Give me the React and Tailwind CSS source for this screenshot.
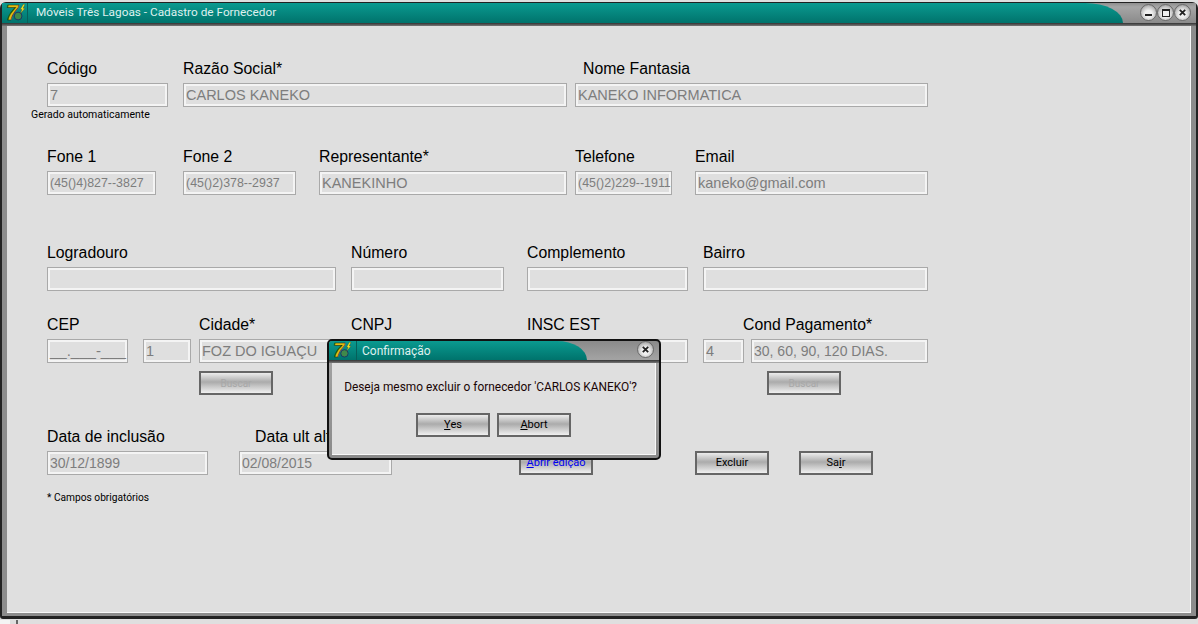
const sans = "font-['Liberation_Sans',Arial,sans-serif]";
const small = "font-['Roboto','Liberation_Sans',sans-serif]";

function Logo({ className }) {
  return (
    <svg viewBox="0 0 22 20" className={`overflow-visible ${className}`}>
      <circle cx="14" cy="13.5" r="4.5" fill="#3f8a4a" stroke="#1c2a66" strokeWidth="1" />
      <text x="0" y="18" fontSize="25" fontWeight="700" fontStyle="italic" fontFamily="'Liberation Sans',sans-serif" fill="#e3bf12" stroke="#2a1a00" strokeWidth="0.7">7</text>
      <path d="M20 0 L16.5 6 L18.5 6 L16.5 11 L22 4.5 L19.8 4.5 L22 0 Z" fill="#f6e520" stroke="#333" strokeWidth="0.4" />
    </svg>
  );
}

function Round({ children, className = "" }) {
  return (
    <div className={`w-[17px] h-[17px] rounded-full border border-[#6a6a6a] bg-[radial-gradient(circle_at_50%_60%,#f0f0f0_30%,#c4c4c4_60%,#777_100%)] flex items-center justify-center ${className}`}>
      {children}
    </div>
  );
}

function Btn({ children, className = "", text = "text-black text-[11px]" }) {
  return (
    <div className={`w-[74px] h-[24px] border-2 border-[#666] bg-[linear-gradient(#ececec,#ababab_45%,#f0f0f0)] flex items-center justify-center ${small} ${text} ${className}`}>
      {children}
    </div>
  );
}

function Input({ value, className = "" }) {
  return (
    <div className={`h-[24px] border border-[#a9a9a9] shadow-[inset_0_0_0_2px_#f4f4f4] px-[2px] pt-[1px] flex items-center text-[#7d7d7d] whitespace-nowrap overflow-hidden ${className}`}>
      {value}
    </div>
  );
}

function Field({ label, value = "", className = "", labelClass = "", inputClass = "text-[14.5px]" }) {
  return (
    <div className={`flex flex-col ${className}`}>
      <div className={`h-[25px] pt-[2px] text-[15.8px] leading-[18px] text-black whitespace-nowrap ${labelClass}`}>{label}</div>
      <Input value={value} className={inputClass} />
    </div>
  );
}

function FormRows() {
  return (
    <div className={`pl-[40px] ${sans}`}>
      <div className="flex pt-[32px]">
        <Field className="w-[121px]" label="Código" value="7" />
        <Field className="w-[384px] ml-[15px]" label="Razão Social*" value="CARLOS KANEKO" />
        <Field className="w-[353px] ml-[8px]" label="Nome Fantasia" labelClass="pl-[8px]" value="KANEKO INFORMATICA" />
      </div>
      <div className={`-ml-[16px] h-[39px] pt-[1px] text-[10.5px] leading-[14px] text-black ${small}`}>Gerado automaticamente</div>
      <div className="flex">
        <Field className="w-[109px]" label="Fone 1" value="(45()4)827--3827" inputClass="text-[12.4px]" />
        <Field className="w-[113px] ml-[27px]" label="Fone 2" value="(45()2)378--2937" inputClass="text-[12.4px]" />
        <Field className="w-[248px] ml-[23px]" label="Representante*" value="KANEKINHO" />
        <Field className="w-[97px] ml-[8px]" label="Telefone" value="(45()2)229--1911" inputClass="text-[12.4px]" />
        <Field className="w-[233px] ml-[23px]" label="Email" value="kaneko@gmail.com" />
      </div>
      <div className="flex mt-[47px]">
        <Field className="w-[289px]" label="Logradouro" />
        <Field className="w-[153px] ml-[15px]" label="Número" />
        <Field className="w-[161px] ml-[23px]" label="Complemento" />
        <Field className="w-[225px] ml-[15px]" label="Bairro" />
      </div>
      <div className="flex mt-[23px]">
        <Field className="w-[81px]" label="CEP" value="__.___-___" inputClass="text-[15px]" />
        <Field className="w-[48px] ml-[15px]" label={"\u00a0"} value="1" />
        <div className="ml-[8px] w-[144px]">
          <Field label="Cidade*" value="FOZ DO IGUAÇU" />
          <Btn className="mt-[8px]" text="text-[#a8a8a8] text-[10px]">Buscar</Btn>
        </div>
        <Field className="w-[152px] ml-[8px]" label="CNPJ" />
        <Field className="w-[161px] ml-[24px]" label="INSC EST" />
        <Field className="w-[41px] ml-[15px]" label={"\u00a0"} value="4" />
        <div className="ml-[7px] w-[177px]">
          <Field label="Cond Pagamento*" labelClass="-ml-[8px]" value="30, 60, 90, 120 DIAS." inputClass="text-[14px]" />
          <Btn className="mt-[8px] ml-[16px]" text="text-[#a8a8a8] text-[10px]">Buscar</Btn>
        </div>
      </div>
      <div className="flex items-end mt-[31px]">
        <Field className="w-[161px]" label="Data de inclusão" value="30/12/1899" inputClass="text-[14px]" />
        <Field className="w-[153px] ml-[31px]" label="Data ult alt" labelClass="pl-[16px]" value="02/08/2015" inputClass="text-[14px]" />
        <Btn className="ml-[127px]" text="text-[#0000ee] text-[11px]"><span><u>A</u>brir edição</span></Btn>
        <Btn className="ml-[102px]">Excluir</Btn>
        <Btn className="ml-[30px]"><span>Sa<u>i</u>r</span></Btn>
      </div>
      <div className={`mt-[16px] text-[10.2px] leading-[14px] text-black ${small}`}>* Campos obrigatórios</div>
    </div>
  );
}

function Dialog() {
  return (
    <div className={`absolute left-[327px] top-[339px] w-[334px] h-[121px] rounded-[5px] border-2 border-[#111] bg-[linear-gradient(#8a8a8a,#a2a2a2_15%,#8a8a8a)] flex flex-col ${small}`}>
      <div className="h-[19px] relative shrink-0 flex items-center">
        <div className="absolute left-0 top-0 bottom-0 w-[258px] rounded-tr-[30px_19px] rounded-tl-[3px] bg-[linear-gradient(#0a9a90,#00736c)]" />
        <Logo className="relative w-[18px] h-[17px] ml-[4px]" />
        <div className="relative w-[1px] h-[19px] ml-[5px] bg-[#075f5a]" />
        <div className="relative ml-[5px] text-[12px] text-[#dff0ee]">Confirmação</div>
        <Round className="absolute right-[5px] top-[0px]">
          <svg viewBox="0 0 10 10" className="w-[9px] h-[9px]"><path d="M2 2 L8 8 M8 2 L2 8" stroke="#222" strokeWidth="2" /></svg>
        </Round>
      </div>
      <div className="h-[3px] shrink-0 bg-[linear-gradient(#333,#777)]" />
      <div className="flex-1 ml-[3px] mr-[3px] mb-[3px] border-b border-r border-[#f8f8f8] bg-[#dfdfdf] flex flex-col items-center">
        <div className="mt-[16px] -ml-[6px] text-[11.9px] leading-[16px] text-[#1a0505] whitespace-nowrap">Deseja mesmo excluir o fornecedor 'CARLOS KANEKO'?</div>
        <div className="flex gap-[7px] mt-[18px]">
          <Btn><span><u>Y</u>es</span></Btn>
          <Btn><span><u>A</u>bort</span></Btn>
        </div>
      </div>
    </div>
  );
}

export default function App() {
  return (
    <div className="relative w-[1198px] h-[624px] overflow-hidden bg-[#dfdfdf]">
      <div className="absolute left-0 top-[620px] w-[10px] h-[4px] bg-[#f4f4f4]" />
      <div className="absolute left-[16px] top-[620px] w-[2px] h-[4px] bg-[#666]" />
      <div className="absolute inset-x-0 top-[2px] h-[617px] rounded-t-[6px] rounded-b-[3px] bg-[#8c8c8c] border-t border-x-2 border-b-[3px] border-[#222] flex flex-col">
        <div className={`h-[20px] shrink-0 relative flex items-center bg-[linear-gradient(#8e8e8e,#a6a6a6_20%,#8a8a8a)] ${small}`}>
          <div className="absolute left-0 top-0 bottom-0 w-[1121px] rounded-tr-[38px_20px] bg-[linear-gradient(#0a9a90,#00736c)]" />
          <Logo className="relative w-[19px] h-[18px] ml-[4px]" />
          <div className="relative w-[1px] h-[20px] ml-[2px] bg-[#075f5a]" />
          <div className="relative ml-[8px] text-[11.8px] text-[#dff0ee]">Móveis Três Lagoas - Cadastro de Fornecedor</div>
          <div className="absolute right-[5px] top-[1px] flex gap-0">
            <Round><div className="w-[7px] h-[2px] mt-[5px] bg-[#222]" /></Round>
            <Round><div className="w-[8px] h-[8px] border border-t-2 border-[#222]" /></Round>
            <Round><svg viewBox="0 0 10 10" className="w-[9px] h-[9px]"><path d="M2 2 L8 8 M8 2 L2 8" stroke="#222" strokeWidth="2" /></svg></Round>
          </div>
        </div>
        <div className="h-[3px] shrink-0 bg-[linear-gradient(#333,#777)]" />
        <div className="flex-1 ml-[5px] mr-[5px] mb-[3px] border-b border-r border-[#f8f8f8] bg-[#dfdfdf]">
          <FormRows />
        </div>
      </div>
      <Dialog />
    </div>
  );
}
